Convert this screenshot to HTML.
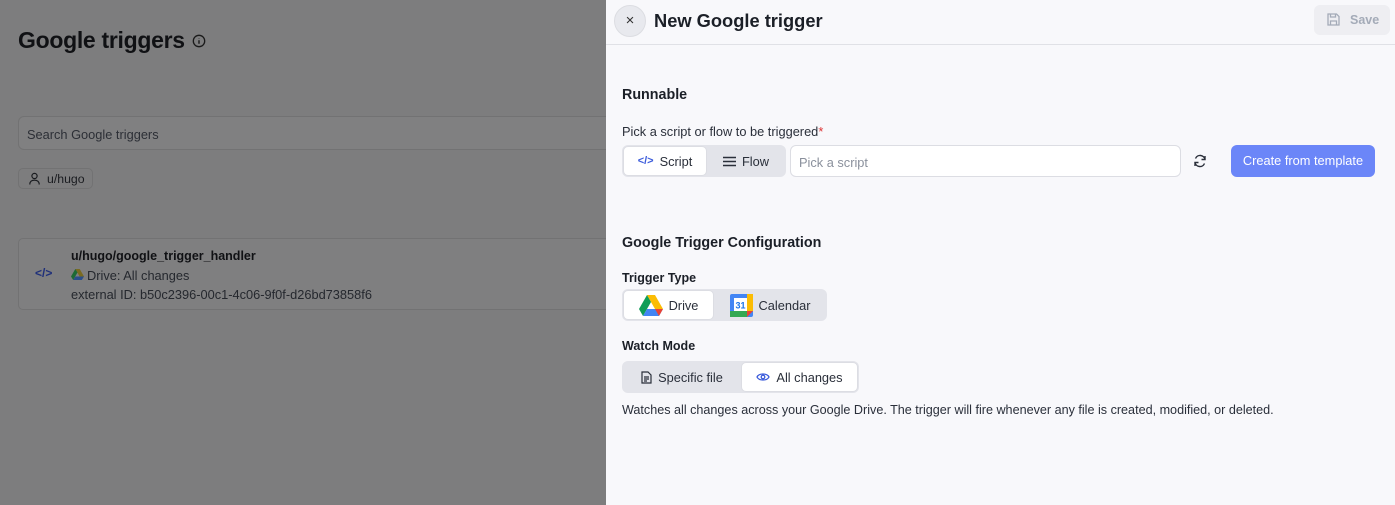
<!DOCTYPE html>
<html><head><meta charset="utf-8"><style>
*{box-sizing:border-box;margin:0;padding:0}
body{width:1395px;height:505px;overflow:hidden;font-family:"Liberation Sans",sans-serif;background:#7d7d7e;position:relative;color:#1e2430}
.abs{position:absolute}
.l{color:#101114}
.drawer{position:absolute;left:606px;top:0;width:789px;height:505px;background:#f8f8fb}
.seg{position:absolute;display:flex;background:#e3e4ea;border-radius:6px;padding:1px}
.seg div{display:flex;align-items:center;justify-content:center;gap:6px;font-size:12.8px;color:#2a2f3a;border-radius:5px}
.seg .on{background:#fff;border:1px solid #dcdde3}
h3{font-size:14.3px;font-weight:bold;color:#1b1f27}
.lab{font-size:12.5px;font-weight:bold;color:#1b1f27}
</style></head><body>
<div class="abs l" style="left:18px;top:27px;font-size:23px;font-weight:bold;letter-spacing:-0.3px">Google triggers</div>
<svg class="abs" style="left:192px;top:34px" width="14" height="14" viewBox="0 0 14 14"><circle cx="7" cy="7" r="5.7" fill="none" stroke="#1a1a1a" stroke-width="1.3"/><path d="M7 6.3v3.5M7 4.3v.3" stroke="#1a1a1a" stroke-width="1.4"/></svg>
<div class="abs" style="left:18px;top:116px;width:600px;height:34px;border:1px solid #727273;border-radius:6px;background:#808081;font-size:12.8px;color:#2c2f36;padding:10px 8px">Search Google triggers</div>
<div class="abs" style="left:18px;top:168px;width:75px;height:21px;border:1px solid #727273;border-radius:5px;font-size:12.3px;color:#1a1c20;padding:3px 0 0 28px">u/hugo
<svg class="abs" style="left:9px;top:3px" width="13" height="13" viewBox="0 0 13 13"><circle cx="6.5" cy="4" r="2.6" fill="none" stroke="#1a1c20" stroke-width="1.2"/><path d="M1.8 12.5c0-3 2-4.3 4.7-4.3s4.7 1.3 4.7 4.3" fill="none" stroke="#1a1c20" stroke-width="1.2"/></svg></div>
<div class="abs" style="left:18px;top:238px;width:600px;height:72px;border:1px solid #727273;border-radius:5px;background:#7f7f80"></div>
<div class="abs" style="left:35px;top:266px;font-size:12px;color:#1e2f7a;font-weight:bold">&lt;/&gt;</div>
<div class="abs l" style="left:71px;top:249px;font-size:12.5px;font-weight:bold">u/hugo/google_trigger_handler</div>
<svg class="abs" style="left:71px;top:269px" width="13" height="11" viewBox="0 0 13 11"><path d="M4.3 0h4.4l4.3 7.5H8.6z" fill="#7a6a20"/><path d="M4.3 0L0 7.5l2.2 3.5 4.3-7.5z" fill="#1d6a35"/><path d="M2.2 11h8.6L13 7.5H4.4z" fill="#2a4e8a"/></svg>
<div class="abs" style="left:87px;top:268px;font-size:12.8px;color:#25282e">Drive: All changes</div>
<div class="abs" style="left:71px;top:287px;font-size:12.8px;color:#25282e">external ID: b50c2396-00c1-4c06-9f0f-d26bd73858f6</div>

<div class="drawer">
  <div class="abs" style="left:0;top:44px;width:789px;height:1px;background:#e0e1e6"></div>
  <div class="abs" style="left:8px;top:5px;width:32px;height:32px;border-radius:50%;background:#e8e9ee;border:1px solid #dcdde2;text-align:center;line-height:29px;font-size:15px;color:#333">×</div>
  <div class="abs" style="left:48px;top:10px;font-size:18.3px;font-weight:bold;color:#1b1f27">New Google trigger</div>
  <div class="abs" style="left:708px;top:5px;width:76px;height:30px;border-radius:6px;background:#eeeef2;color:#a4abb8;font-size:12.5px;font-weight:bold;padding:8px 0 0 36px">Save
    <svg class="abs" style="left:12px;top:7px" width="15" height="15" viewBox="0 0 15 15" fill="none" stroke="#a4abb8" stroke-width="1.3"><path d="M2 2h8.5L13 4.5V13H2z"/><path d="M4.5 2v3h5V2M4.5 13V9h6v4"/></svg></div>

  <h3 class="abs" style="left:16px;top:87px">Runnable</h3>
  <div class="abs" style="left:16px;top:124px;font-size:12.8px;color:#2a2f3a">Pick a script or flow to be triggered<span style="color:#d33">*</span></div>
  <div class="seg" style="left:16px;top:145px;width:164px;height:32px">
    <div class="on" style="width:84px"><span style="color:#3b5bdb;font-size:11px;font-weight:bold">&lt;/&gt;</span>Script</div>
    <div style="width:78px"><svg width="13" height="11" viewBox="0 0 13 11" stroke="#2a2f3a" stroke-width="1.4"><path d="M0 1.5h13M0 5.5h13M0 9.5h13"/></svg>Flow</div>
  </div>
  <div class="abs" style="left:184px;top:145px;width:391px;height:32px;background:#fff;border:1px solid #dcdde3;border-radius:6px;font-size:12.8px;color:#8a909c;padding:9px 8px">Pick a script</div>
  <svg class="abs" style="left:587px;top:154px" width="14" height="14" viewBox="0 0 14 14" fill="none" stroke="#2a2f3a" stroke-width="1.4"><path d="M12 5.5A5 5 0 0 0 2.5 4.5M2 8.5a5 5 0 0 0 9.5 1"/><path d="M12 2v3.5H8.5M2 12V8.5h3.5"/></svg>
  <div class="abs" style="left:625px;top:145px;width:144px;height:32px;background:#6b86f8;border-radius:6px;color:#fff;font-size:12.8px;text-align:center;line-height:32px">Create from template</div>

  <h3 class="abs" style="left:16px;top:235px">Google Trigger Configuration</h3>
  <div class="lab abs" style="left:16px;top:271px">Trigger Type</div>
  <div class="seg" style="left:16px;top:289px;width:205px;height:32px">
    <div class="on" style="width:91px"><svg width="24" height="21" viewBox="0 0 24 21"><path d="M8 0h8l8 14h-8z" fill="#fbbc04"/><path d="M8 0L0 14l4 7 8-14z" fill="#0f9d58"/><path d="M4 21h16l4-7H8z" fill="#4285f4"/><path d="M16 14l4 7 4-7z" fill="#ea4335"/></svg>Drive</div>
    <div style="width:112px"><svg width="23" height="23" viewBox="0 0 23 23"><rect width="23" height="23" rx="2" fill="#4285f4"/><rect x="0" y="17" width="17" height="6" fill="#34a853"/><rect x="17" y="0" width="6" height="17" fill="#fbbc04"/><path d="M17 17h6l-6 6z" fill="#ea4335"/><rect x="4" y="4" width="13" height="13" fill="#fff"/><text x="10.5" y="14.5" font-size="9" font-weight="bold" fill="#1a73e8" text-anchor="middle" font-family="Liberation Sans">31</text></svg>Calendar</div>
  </div>
  <div class="lab abs" style="left:16px;top:339px">Watch Mode</div>
  <div class="seg" style="left:16px;top:361px;width:237px;height:32px">
    <div style="width:118px"><svg width="11" height="13" viewBox="0 0 11 13" fill="none" stroke="#2a2f3a" stroke-width="1.2"><path d="M1 1h6l3 3v8H1z M3 6h5M3 8h5M3 10h3"/></svg>Specific file</div>
    <div class="on" style="width:117px"><svg width="14" height="10" viewBox="0 0 14 10" fill="none" stroke="#3b5bdb" stroke-width="1.3"><path d="M1 5c2-4 10-4 12 0-2 4-10 4-12 0z"/><circle cx="7" cy="5" r="1.8"/></svg>All changes</div>
  </div>
  <div class="abs" style="left:16px;top:403px;font-size:12.6px;color:#2a2f3a">Watches all changes across your Google Drive. The trigger will fire whenever any file is created, modified, or deleted.</div>
</div>
</body></html>
